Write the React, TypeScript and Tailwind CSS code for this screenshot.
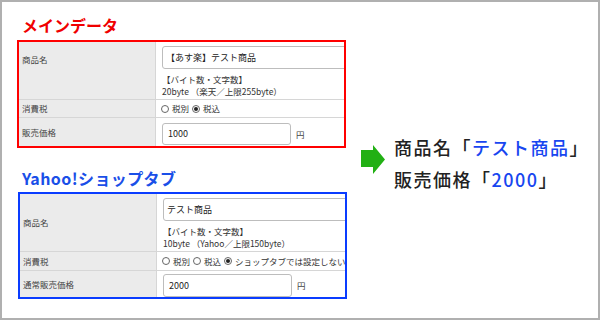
const font = { fontFamily: '"Noto Sans CJK JP", "Noto Sans", sans-serif' };

function Radio({ checked }: { checked?: boolean }) {
  return (
    <span className="inline-flex items-center justify-center w-[8px] h-[8px] rounded-full border border-[#666] bg-white mr-[3px]">
      {checked && <span className="w-[4px] h-[4px] rounded-full bg-[#222]" />}
    </span>
  );
}

function Label({ children, top }: { children: React.ReactNode; top?: boolean }) {
  return (
    <div
      className={`w-[137px] shrink-0 bg-[#ebebeb] border-r border-[#d6d6d6] pl-[3px] text-[#444] flex ${
        top ? "items-start pt-[11px]" : "items-center"
      }`}
    >
      {children}
    </div>
  );
}

function Box({
  color,
  name,
  nameInput,
  bytes,
  tax,
  priceLabel,
  price,
  nameTop,
  heights,
  priceTop,
  priceH,
}: {
  color: string;
  name: string;
  nameInput: string;
  bytes: string;
  tax: string[];
  priceLabel: string;
  price: string;
  nameTop?: boolean;
  heights: [string, string, string];
  priceTop: string;
  priceH: string;
}) {
  return (
    <div className={`w-[329px] border-2 ${color} overflow-hidden bg-white text-[8.5px] text-[#333]`}>
      <div className={`flex ${heights[0]} border-b border-[#d6d6d6]`}>
        <Label top={nameTop}>{name}</Label>
        <div className="pl-[6px] pt-[4px] leading-[12px]">
          <div className="w-[320px] h-[23px] border border-[#bdbdbd] rounded-[3px] flex items-center pl-[3px] text-[9px] text-[#222]">
            {nameInput}
          </div>
          <div className="mt-[4px]">【バイト数・文字数】</div>
          <div>{bytes}</div>
        </div>
      </div>
      <div className={`flex ${heights[1]} border-b border-[#d6d6d6]`}>
        <Label>消費税</Label>
        <div className="pl-[5px] flex items-center whitespace-nowrap">
          {tax.map((t, i) => (
            <span key={t} className="inline-flex items-center mr-[3px]">
              <Radio checked={i === tax.length - 1} />
              {t}
            </span>
          ))}
        </div>
      </div>
      <div className={`flex ${heights[2]}`}>
        <Label>{priceLabel}</Label>
        <div className={`pl-[6px] ${priceTop} flex items-start`}>
          <div className={`w-[129px] ${priceH} border border-[#bdbdbd] rounded-[3px] flex items-center pl-[5px] text-[9px] text-[#222]`}>
            {price}
          </div>
          <span className="ml-[5px] self-center text-[#444]">円</span>
        </div>
      </div>
    </div>
  );
}

export default function App() {
  return (
    <div style={font} className="w-[600px] h-[320px] bg-white border-2 border-[#b0b0b0] flex overflow-hidden">
      <div className="pl-[15px] pt-[13px] flex flex-col">
        <div className="text-[16px] leading-[20px] font-bold text-[#f00000] pl-[5px]">メインデータ</div>
        <div className="mt-[5px]">
          <Box
            color="border-[#ff0000]"
            name="商品名"
            nameInput="【あす楽】テスト商品"
            bytes="20byte （楽天／上限255byte）"
            tax={["税別", "税込"]}
            priceLabel="販売価格"
            price="1000"
            nameTop
            heights={["h-[58px]", "h-[18px]", "h-[28px]"]}
            priceTop="pt-[5px]"
            priceH="h-[22px]"
          />
        </div>
        <div className="mt-[20px] text-[16px] leading-[20px] font-bold text-[#1a4fe8] pl-[5px] tracking-[0.4px]">
          Yahoo!ショップタブ
        </div>
        <div className="mt-[4px] ml-[1px]">
          <Box
            color="border-[#0a3cff]"
            name="商品名"
            nameInput="テスト商品"
            bytes="10byte （Yahoo／上限150byte）"
            tax={["税別", "税込", "ショップタブでは設定しない"]}
            priceLabel="通常販売価格"
            price="2000"
            heights={["h-[58px]", "h-[19px]", "h-[26px]"]}
            priceTop="pt-[3px]"
            priceH="h-[23px]"
          />
        </div>
      </div>
      <div className="flex items-start mt-[129px] ml-[14px]">
        <svg width="24" height="29" viewBox="0 0 24 29" className="mt-[14px] shrink-0">
          <path d="M0 5 H12 V0 L24 14.5 L12 29 V22 H0 Z" fill="#22b014" />
        </svg>
        <div className="ml-[9px] text-[18px] leading-[32px] font-medium text-[#222] tracking-[1.5px] whitespace-nowrap">
          <div>
            商品名「<span className="text-[#1846f0]">テスト商品</span>」
          </div>
          <div>
            販売価格「<span className="text-[#1846f0]">2000</span>」
          </div>
        </div>
      </div>
    </div>
  );
}
